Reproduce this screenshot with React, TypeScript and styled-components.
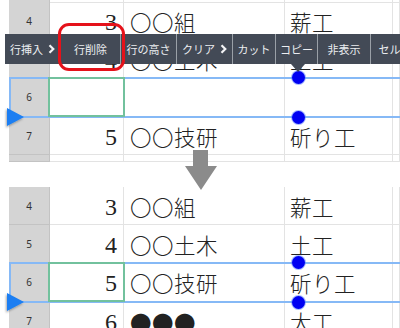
import React from "react";
import styled, { createGlobalStyle } from "styled-components";

const Global = createGlobalStyle`
  html, body { margin: 0; padding: 0; background: #fff; }
  #root { width: 400px; height: 328px; }
`;

const Page = styled.div`
  position: relative;
  width: 400px;
  height: 328px;
  overflow: hidden;
  background: #fff;
  padding-left: 9px;
  box-sizing: border-box;
  font-family: "Noto Sans CJK JP", "Noto Sans", sans-serif;
`;

const Panel = styled.div<{ $h: number }>`
  position: relative;
  height: ${(p) => p.$h}px;
  display: flex;
  flex-direction: column;
  overflow: visible;
`;

const Gap = styled.div`
  height: 25px;
`;

const Row = styled.div<{ $h: number; $sel?: boolean }>`
  position: relative;
  display: grid;
  grid-template-columns: 41px 74px 161px 108px 1fr;
  height: ${(p) => p.$h}px;
  flex: none;
  ${(p) =>
    p.$sel
      ? `
    &::before, &::after {
      content: "";
      position: absolute;
      left: 0;
      right: 0;
      height: 2px;
      background: #86b9f6;
      z-index: 2;
    }
    &::before { top: -1px; }
    &::after { bottom: -1px; }
  `
      : ""}
`;

const Cell = styled.div<{ $align?: "left" | "right"; $pl?: number }>`
  position: relative;
  box-sizing: border-box;
  border-right: 1px solid #e3e3e3;
  border-bottom: 1px solid #e3e3e3;
  display: flex;
  align-items: center;
  justify-content: ${(p) => (p.$align === "right" ? "flex-end" : "flex-start")};
  padding: ${(p) => (p.$align === "right" ? "2px 6px 0 0" : `2px 0 0 ${p.$pl ?? 6}px`)};
  white-space: nowrap;
  overflow: visible;
`;

const HeadCell = styled.div<{ $sel?: boolean }>`
  position: relative;
  box-sizing: border-box;
  background: #d4d4d4;
  border-right: 1px solid #c3c3c3;
  border-bottom: 1px solid #c3c3c3;
  display: flex;
  align-items: center;
  justify-content: center;
  font-family: "Noto Sans", "Liberation Sans", sans-serif;
  font-size: 10px;
  color: #333;
  ${(p) =>
    p.$sel
      ? `
    &::before {
      content: "";
      position: absolute;
      left: 0; top: -1px; bottom: -1px;
      width: 2px;
      background: #86b9f6;
      z-index: 2;
    }
  `
      : ""}
`;

const Num = styled.span`
  font-family: "Liberation Serif", "DejaVu Serif", serif;
  font-size: 24px;
  color: #222;
  line-height: 1;
`;

const Jp = styled.span`
  font-family: "Noto Sans CJK JP", sans-serif;
  font-weight: 300;
  font-size: 21.5px;
  letter-spacing: 0.5px;
  color: #222;
  line-height: 1;
`;

const GreenBox = styled.div`
  position: absolute;
  left: -2px;
  top: -1px;
  right: -2px;
  bottom: -1px;
  border: 2px solid #72c19d;
  z-index: 3;
  pointer-events: none;
`;

const Dot = styled.div<{ $pos: "top" | "bottom" }>`
  position: absolute;
  left: 283px;
  ${(p) => (p.$pos === "top" ? "top: -7px;" : "bottom: -7px;")}
  width: 13px;
  height: 13px;
  border-radius: 50%;
  background: #0000f2;
  box-shadow: 0 0 0 1px rgba(80, 120, 255, 0.5);
  z-index: 5;
`;

const Marker = styled.svg`
  position: absolute;
  left: -3px;
  bottom: -10px;
  width: 20px;
  height: 20px;
  z-index: 5;
  overflow: visible;
`;

const Toolbar = styled.div`
  position: absolute;
  top: 34px;
  left: -4px;
  height: 30px;
  display: flex;
  background: #434a56;
  z-index: 10;
`;

const Seg = styled.div<{ $w: number; $first?: boolean }>`
  width: ${(p) => p.$w}px;
  flex: none;
  box-sizing: border-box;
  ${(p) => (p.$first ? "" : "border-left: 1px solid #9aa0a7;")}
  display: flex;
  align-items: center;
  justify-content: center;
  gap: 5px;
  color: #eceef1;
  font-family: "Noto Sans CJK JP", sans-serif;
  font-size: 11px;
  font-weight: 400;
  white-space: nowrap;
  overflow: hidden;
`;

const Pointer = styled.div`
  position: absolute;
  left: 286px;
  top: 30px;
  width: 0;
  height: 0;
  border-left: 7px solid transparent;
  border-right: 7px solid transparent;
  border-top: 8px solid #434a56;
`;

const RedFrame = styled.div`
  position: absolute;
  left: 49px;
  top: 23px;
  width: 67px;
  height: 48px;
  box-sizing: border-box;
  border: 3px solid #e5121a;
  border-radius: 11px;
  z-index: 12;
`;

const Arrow = styled.svg`
  position: absolute;
  left: 185px;
  top: 150px;
  width: 32px;
  height: 40px;
  z-index: 20;
`;

const Chevron = () => (
  <svg width="7" height="10" viewBox="0 0 7 10">
    <polyline points="1.5,1.2 5.3,5 1.5,8.8" fill="none" stroke="#f2f3f5" strokeWidth="2.2" />
  </svg>
);

type RowData = { n?: string; num?: string; name?: string; job?: string; h: number; sel?: boolean };

const SheetRow: React.FC<RowData> = ({ n, num, name, job, h, sel }) => (
  <Row $h={h} $sel={sel}>
    <HeadCell $sel={sel}>{n}</HeadCell>
    <Cell $align="right">
      {num && <Num>{num}</Num>}
      {sel && <GreenBox />}
    </Cell>
    <Cell>{name && <Jp>{name}</Jp>}</Cell>
    <Cell $pl={5}>{job && <Jp>{job}</Jp>}</Cell>
    <Cell />
    {sel && (
      <>
        <Dot $pos="top" />
        <Dot $pos="bottom" />
        <Marker viewBox="0 0 20 20">
          <defs>
            <filter id="sh" x="-30%" y="-30%" width="160%" height="160%">
              <feDropShadow dx="-1" dy="1.5" stdDeviation="0.8" floodColor="#000" floodOpacity="0.35" />
            </filter>
          </defs>
          <polygon points="1,1 18,10 1,19" fill="#1a7ef2" filter="url(#sh)" />
        </Marker>
      </>
    )}
  </Row>
);

const topRows: RowData[] = [
  { h: 2 },
  { n: "4", num: "3", name: "〇〇組", job: "薪工", h: 38 },
  { n: "5", num: "4", name: "〇〇土木", job: "土工", h: 38 },
  { n: "6", h: 39, sel: true },
  { n: "7", num: "5", name: "〇〇技研", job: "斫り工", h: 38 },
  { n: "", h: 7 },
];

const bottomRows: RowData[] = [
  { n: "4", num: "3", name: "〇〇組", job: "薪工", h: 38 },
  { n: "5", num: "4", name: "〇〇土木", job: "土工", h: 38 },
  { n: "6", num: "5", name: "〇〇技研", job: "斫り工", h: 39, sel: true },
  { n: "7", num: "6", name: "●●●", job: "大工", h: 39 },
];

const tools: { label: string; w: number; chev?: boolean }[] = [
  { label: "行挿入", w: 55, chev: true },
  { label: "行削除", w: 60 },
  { label: "行の高さ", w: 56 },
  { label: "クリア", w: 56, chev: true },
  { label: "カット", w: 43 },
  { label: "コピー", w: 42 },
  { label: "非表示", w: 53 },
  { label: "セル結合", w: 60 },
];

export default function App() {
  return (
    <>
      <Global />
      <Page>
        <Panel $h={162}>
          {topRows.map((r, i) => (
            <SheetRow key={i} {...r} />
          ))}
          <Toolbar>
            {tools.map((t, i) => (
              <Seg key={t.label} $w={t.w} $first={i === 0}>
                <span>{t.label}</span>
                {t.chev && <Chevron />}
              </Seg>
            ))}
            <Pointer />
          </Toolbar>
          <RedFrame />
        </Panel>
        <Gap />
        <Panel $h={141}>
          {bottomRows.map((r, i) => (
            <SheetRow key={i} {...r} />
          ))}
        </Panel>
        <Arrow viewBox="0 0 32 40">
          <polygon points="8,0 23,0 23,16 32,16 16,40 0,16 8,16" fill="#8b8b8b" />
        </Arrow>
      </Page>
    </>
  );
}
